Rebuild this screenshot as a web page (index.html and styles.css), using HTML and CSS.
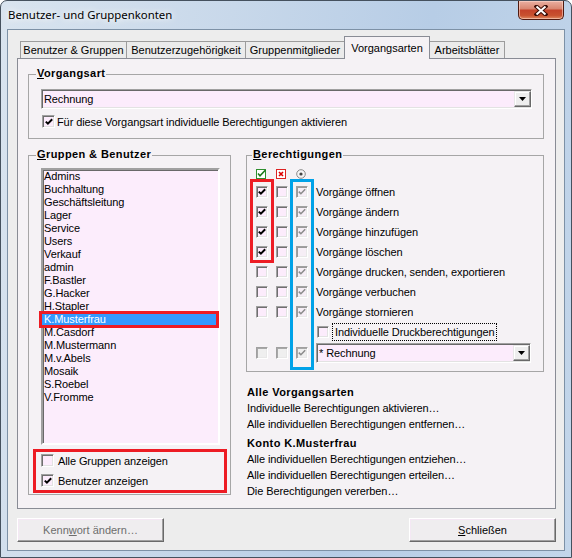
FILE: index.html
```html
<!DOCTYPE html>
<html lang="de">
<head>
<meta charset="utf-8">
<title>Benutzer- und Gruppenkonten</title>
<link rel="stylesheet" href="styles.css">
</head>
<body>
<div class="window">
  <div class="titlebar">
    <span class="title">Benutzer- und Gruppenkonten</span>
    <span class="close"><svg width="14" height="11" viewBox="0 0 14 11"><path d="M2.5 1.5 L11.5 9.5 M11.5 1.5 L2.5 9.5" stroke="#3b0d06" stroke-width="4" stroke-linecap="square"/><path d="M2.5 1.5 L11.5 9.5 M11.5 1.5 L2.5 9.5" stroke="#fff" stroke-width="2"/></svg></span>
  </div>
  <div class="client">
    <div class="tabs">
      <div class="tab t1">Benutzer &amp; Gruppen</div>
      <div class="tab t2">Benutzerzugehörigkeit</div>
      <div class="tab t3">Gruppenmitglieder</div>
      <div class="tab t4 active">Vorgangsarten</div>
      <div class="tab t5">Arbeitsblätter</div>
    </div>
    <div class="panel">
      <div class="group g-vorgang">
        <div class="gtitle"><u>V</u>organgsart</div>
        <div class="combo c-main"><span class="ctext">Rechnung</span><span class="cbtn"><svg width="7" height="4" viewBox="0 0 7 4"><path d="M0 0 H7 L3.5 4 Z" fill="#000"/></svg></span></div>
        <div class="chk-row r-vorgang"><span class="cb on"><svg width="8" height="8" viewBox="0 0 8 8"><polyline points="0.8,3.6 2.9,5.7 7.2,1.3" fill="none" stroke="#000" stroke-width="2"/></svg></span>Für diese Vorgangsart individuelle Berechtigungen aktivieren</div>
      </div>
      <div class="lower">
        <div class="group g-users">
          <div class="gtitle"><u>G</u>ruppen &amp; Benutzer</div>
          <ul class="listbox">
            <li>Admins</li>
            <li>Buchhaltung</li>
            <li>Geschäftsleitung</li>
            <li>Lager</li>
            <li>Service</li>
            <li>Users</li>
            <li>Verkauf</li>
            <li>admin</li>
            <li>F.Bastler</li>
            <li>G.Hacker</li>
            <li>H.Stapler</li>
            <li class="sel">K.Musterfrau</li>
            <li>M.Casdorf</li>
            <li>M.Mustermann</li>
            <li>M.v.Abels</li>
            <li>Mosaik</li>
            <li>S.Roebel</li>
            <li>V.Fromme</li>
          </ul>
          <div class="redbox">
            <div class="chk-row"><span class="cb"></span>Alle Gruppen anzeigen</div>
            <div class="chk-row"><span class="cb on"><svg width="8" height="8" viewBox="0 0 8 8"><polyline points="0.8,3.6 2.9,5.7 7.2,1.3" fill="none" stroke="#000" stroke-width="2"/></svg></span>Benutzer anzeigen</div>
          </div>
        </div>
        <div class="rightcol">
          <div class="group g-rights">
            <div class="gtitle t-rights"><u>B</u>erechtigungen</div>
            <div class="matrix">
              <span class="hicon"><svg width="11" height="10" viewBox="0 0 11 10"><rect x="0.5" y="0.5" width="9" height="9" fill="#fff" stroke="#2f8f2f"/><polyline points="2,4.5 4,6.8 9.5,1" fill="none" stroke="#1d7a1d" stroke-width="1.6"/></svg></span>
              <span class="hicon"><svg width="11" height="10" viewBox="0 0 11 10"><rect x="0.5" y="0.5" width="9" height="9" fill="#fff" stroke="#d22"/><path d="M3 3 L7 7 M7 3 L3 7" stroke="#d00" stroke-width="1.6"/></svg></span>
              <span class="hicon"><svg width="11" height="10" viewBox="0 0 11 10"><circle cx="5" cy="5" r="4.3" fill="#f4f4f4" stroke="#8a8a8a"/><circle cx="5" cy="5" r="1.6" fill="#444"/></svg></span>
              <span></span>

              <span class="cb sm on"><svg width="8" height="8" viewBox="0 0 8 8"><polyline points="0.8,3.6 2.9,5.7 7.2,1.3" fill="none" stroke="#000" stroke-width="2"/></svg></span><span class="cb sm"></span><span class="cb sm gray"><svg width="8" height="8" viewBox="0 0 8 8"><polyline points="0.8,3.6 2.9,5.7 7.2,1.3" fill="none" stroke="#8c8c8c" stroke-width="1.6"/></svg></span><span class="mlabel">Vorgänge öffnen</span>

              <span class="cb sm on"><svg width="8" height="8" viewBox="0 0 8 8"><polyline points="0.8,3.6 2.9,5.7 7.2,1.3" fill="none" stroke="#000" stroke-width="2"/></svg></span><span class="cb sm"></span><span class="cb sm gray"><svg width="8" height="8" viewBox="0 0 8 8"><polyline points="0.8,3.6 2.9,5.7 7.2,1.3" fill="none" stroke="#8c8c8c" stroke-width="1.6"/></svg></span><span class="mlabel">Vorgänge ändern</span>

              <span class="cb sm on"><svg width="8" height="8" viewBox="0 0 8 8"><polyline points="0.8,3.6 2.9,5.7 7.2,1.3" fill="none" stroke="#000" stroke-width="2"/></svg></span><span class="cb sm"></span><span class="cb sm gray"><svg width="8" height="8" viewBox="0 0 8 8"><polyline points="0.8,3.6 2.9,5.7 7.2,1.3" fill="none" stroke="#8c8c8c" stroke-width="1.6"/></svg></span><span class="mlabel">Vorgänge hinzufügen</span>

              <span class="cb sm on"><svg width="8" height="8" viewBox="0 0 8 8"><polyline points="0.8,3.6 2.9,5.7 7.2,1.3" fill="none" stroke="#000" stroke-width="2"/></svg></span><span class="cb sm"></span><span class="cb sm gray"></span><span class="mlabel">Vorgänge löschen</span>

              <span class="cb sm"></span><span class="cb sm"></span><span class="cb sm gray"><svg width="8" height="8" viewBox="0 0 8 8"><polyline points="0.8,3.6 2.9,5.7 7.2,1.3" fill="none" stroke="#8c8c8c" stroke-width="1.6"/></svg></span><span class="mlabel">Vorgänge drucken, senden, exportieren</span>

              <span class="cb sm"></span><span class="cb sm"></span><span class="cb sm gray"><svg width="8" height="8" viewBox="0 0 8 8"><polyline points="0.8,3.6 2.9,5.7 7.2,1.3" fill="none" stroke="#8c8c8c" stroke-width="1.6"/></svg></span><span class="mlabel">Vorgänge verbuchen</span>

              <span class="cb sm"></span><span class="cb sm"></span><span class="cb sm gray"><svg width="8" height="8" viewBox="0 0 8 8"><polyline points="0.8,3.6 2.9,5.7 7.2,1.3" fill="none" stroke="#8c8c8c" stroke-width="1.6"/></svg></span><span class="mlabel">Vorgänge stornieren</span>

              <span></span><span></span><span></span><span class="mlabel druck"><span class="cb sm"></span><span class="focus">Individuelle Druckberechtigungen</span></span>

              <span class="cb sm dis"></span><span class="cb sm dis"></span><span class="cb sm gray dis"><svg width="8" height="8" viewBox="0 0 8 8"><polyline points="0.8,3.6 2.9,5.7 7.2,1.3" fill="none" stroke="#8c8c8c" stroke-width="1.6"/></svg></span><div class="combo c-small"><span class="ctext">* Rechnung</span><span class="cbtn"><svg width="7" height="4" viewBox="0 0 7 4"><path d="M0 0 H7 L3.5 4 Z" fill="#000"/></svg></span></div>

              <div class="mark mark-red"></div>
              <div class="mark mark-blue"></div>
            </div>
          </div>
          <div class="links">
            <div class="lhead">Alle Vorgangsarten</div>
            <div>Individuelle Berechtigungen aktivieren…</div>
            <div>Alle individuellen Berechtigungen entfernen…</div>
            <div class="lhead second">Konto K.Musterfrau</div>
            <div>Alle individuellen Berechtigungen entziehen…</div>
            <div>Alle individuellen Berechtigungen erteilen…</div>
            <div>Die Berechtigungen vererben…</div>
          </div>
        </div>
      </div>
    </div>
    <div class="buttons">
      <div class="btn disabled">Kenn<u>w</u>ort ändern…</div>
      <div class="btn"><u>S</u>chließen</div>
    </div>
  </div>
</div>
</body>
</html>
```
FILE: styles.css
```css
* { box-sizing: border-box; }
html, body { margin: 0; padding: 0; }
body {
  width: 572px;
  height: 558px;
  overflow: hidden;
  background: #ffffff;
  font-family: "Liberation Sans", Arial, sans-serif;
  font-size: 11px;
  letter-spacing: -0.1px;
  color: #000;
}
u { text-decoration: underline; text-underline-offset: 1px; }

.window {
  width: 572px;
  height: 558px;
  border: 1px solid #45515e;
  border-radius: 7px 7px 0 0;
  padding: 0 6px 6px;
  display: flex;
  flex-direction: column;
  background: linear-gradient(100deg, #d9e4ef 0%, #c8d8ea 35%, #b7cde6 65%, #c3d6ea 100%);
}
.titlebar {
  height: 28px;
  display: flex;
  align-items: flex-start;
  justify-content: space-between;
}
.title {
  font-family: "Noto Sans", "Open Sans", sans-serif;
  font-size: 11.4px;
  letter-spacing: 0;
  line-height: 16px;
  margin: 6px 0 0 1px;
  color: #000;
  text-shadow: 0 0 6px #fff, 0 0 10px rgba(255,255,255,0.9);
}
.close {
  width: 46px;
  height: 19px;
  margin-right: 1px;
  border: 1px solid #4f1a10;
  border-top: 0;
  border-radius: 0 0 5px 5px;
  background: linear-gradient(#eab0a2 0%, #d98772 42%, #c4432a 52%, #c8512f 80%, #de8a60 100%);
  box-shadow: inset 0 0 0 1px rgba(255,220,210,0.55);
  display: flex;
  align-items: center;
  justify-content: center;
}

.client {
  flex: 1;
  background: #ededed;
  border: 1px solid #7d91a6;
  padding: 6px 8px 0 9px;
  display: flex;
  flex-direction: column;
}

.tabs {
  display: flex;
  align-items: flex-end;
  height: 22px;
  margin-left: 3px;
  position: relative;
  z-index: 1;
}
.tab {
  height: 17px;
  border: 1px solid #9c9c9c;
  border-bottom: 0;
  background: #ebebeb;
  margin-right: -1px;
  display: flex;
  align-items: center;
  justify-content: center;
  white-space: nowrap;
  letter-spacing: 0;
}
.tab.active {
  height: 23px;
  margin-bottom: -1px;
  background: #f5f2f5;
  border-color: #898c95;
  position: relative;
  z-index: 2;
  padding-bottom: 1px;
}
.t1 { width: 107px; }
.t2 { width: 120px; }
.t3 { width: 100px; }
.t4 { width: 86px; }
.t5 { width: 76px; }

.panel {
  width: 539px;
  height: 451px;
  border: 1px solid #898c95;
  background: #f5f2f5;
  padding: 15px 11px 0 10px;
}

.group {
  border: 1px solid #a6a6a6;
  display: flex;
  flex-direction: column;
  align-items: flex-start;
}
.gtitle {
  font-weight: bold;
  letter-spacing: 0.4px;
  line-height: 13px;
  margin: -8px 0 0 7px;
  padding: 0 1px;
  background: #f5f2f5;
  white-space: nowrap;
}
.gtitle.t-rights { margin-left: 5px; }

.g-vorgang { padding-bottom: 10px; }

.combo {
  display: flex;
  align-items: center;
  height: 20px;
  border: 1px solid;
  border-color: #a0a0a0 #ffffff #ffffff #a0a0a0;
  box-shadow: inset 1px 1px 0 #696969, inset -1px -1px 0 #e3e3e3;
  background: #fcecfc;
  padding: 0 0 0 2px;
}
.ctext { flex: 1; white-space: nowrap; }
.cbtn {
  width: 17px;
  height: 16px;
  border: 1px solid;
  border-color: #e8e8e8 #696969 #696969 #e8e8e8;
  box-shadow: inset -1px -1px 0 #a0a0a0, inset 1px 1px 0 #fff;
  background: #eeeeee;
  display: flex;
  align-items: center;
  justify-content: center;
}
.c-main { width: 491px; margin: 9px 0 0 12px; }
.c-small { width: 215px; align-self: center; }

.chk-row {
  display: flex;
  align-items: center;
  height: 13px;
  white-space: nowrap;
}
.r-vorgang { margin: 6px 0 0 13px; }
.r-vorgang .cb { margin-right: 2px; }

.cb {
  width: 13px;
  height: 13px;
  flex: none;
  border: 1px solid;
  border-color: #a0a0a0 #ffffff #ffffff #a0a0a0;
  box-shadow: inset 1px 1px 0 #6f6f6f, inset -1px -1px 0 #e3e3e3;
  background: #fcecfc;
  display: flex;
  align-items: center;
  justify-content: center;
  margin-right: 4px;
}
.cb.sm { width: 12px; height: 12px; margin-right: 0; align-self: center; justify-self: start; }
.cb.gray { background: #f6eef6; box-shadow: inset 1px 1px 0 #9a9a9a, inset -1px -1px 0 #e8e8e8; }
.cb.dis { background: #efefef; box-shadow: inset 1px 1px 0 #a8a8a8, inset -1px -1px 0 #e8e8e8; }

.lower {
  display: flex;
  gap: 15px;
  margin-top: 16px;
}
.g-users { width: 203px; height: 340px; }
.listbox {
  list-style: none;
  margin: 7px 0 0 12px;
  padding: 0;
  width: 179px;
  height: 277px;
  border: 2px solid;
  border-color: #a0a0a0 #ffffff #ffffff #a0a0a0;
  box-shadow: inset 1px 1px 0 #696969;
  background: #fcedfc;
}
.listbox li {
  height: 13px;
  line-height: 13px;
  padding-left: 1px;
  white-space: nowrap;
}
.listbox li.sel {
  background: #3399ff;
  color: #fff;
  margin: 0 1px 0 -2px;
  padding-left: 3px;
  outline: 3px solid #ed1c24;
  outline-offset: -1px;
}

.redbox {
  margin: 4px 0 0 4px;
  width: 194px;
  height: 44px;
  border: 3px solid #ed1c24;
  padding: 2px 0 0 5px;
  display: flex;
  flex-direction: column;
  gap: 7px;
}

.rightcol {
  width: 298px;
  display: flex;
  flex-direction: column;
}
.g-rights { width: 298px; padding-bottom: 7px; }
.matrix {
  position: relative;
  margin: 7px 0 0 9px;
  display: grid;
  grid-template-columns: 12px 12px 12px 225px;
  column-gap: 8px;
  grid-template-rows: 14px repeat(8, 20px) 22px;
}
.hicon { display: flex; align-self: start; margin-top: 1px; }
.mlabel {
  display: flex;
  align-items: center;
  white-space: nowrap;
}
.mlabel.druck { padding-left: 1px; }
.mlabel.druck .cb { margin-right: 4px; }
.focus {
  outline: 1px dotted #000;
  outline-offset: 0;
  padding: 1px 2px;
  line-height: 14px;
}
.mark {
  position: absolute;
  top: 11px;
  width: 24px;
  border: 3px solid;
  pointer-events: none;
}
.mark-red { left: -6px; height: 84px; border-color: #ed1c24; }
.mark-blue { left: 34px; height: 191px; border-color: #00a2e8; }

.links {
  margin-top: 12px;
  padding-left: 1px;
  line-height: 16px;
  white-space: nowrap;
}
.lhead { font-weight: bold; letter-spacing: 0.4px; }
.lhead.second { margin-top: 3px; }

.buttons {
  width: 539px;
  margin-top: 9px;
  display: flex;
  justify-content: space-between;
}
.btn {
  width: 147px;
  height: 24px;
  border: 1px solid;
  border-color: #ffffff #696969 #696969 #ffffff;
  box-shadow: inset -1px -1px 0 #a0a0a0, inset 1px 1px 0 #f4e8f4;
  background: #efedef;
  display: flex;
  align-items: center;
  justify-content: center;
  letter-spacing: 0;
}
.btn.disabled { color: #6d6d6d; }
```
